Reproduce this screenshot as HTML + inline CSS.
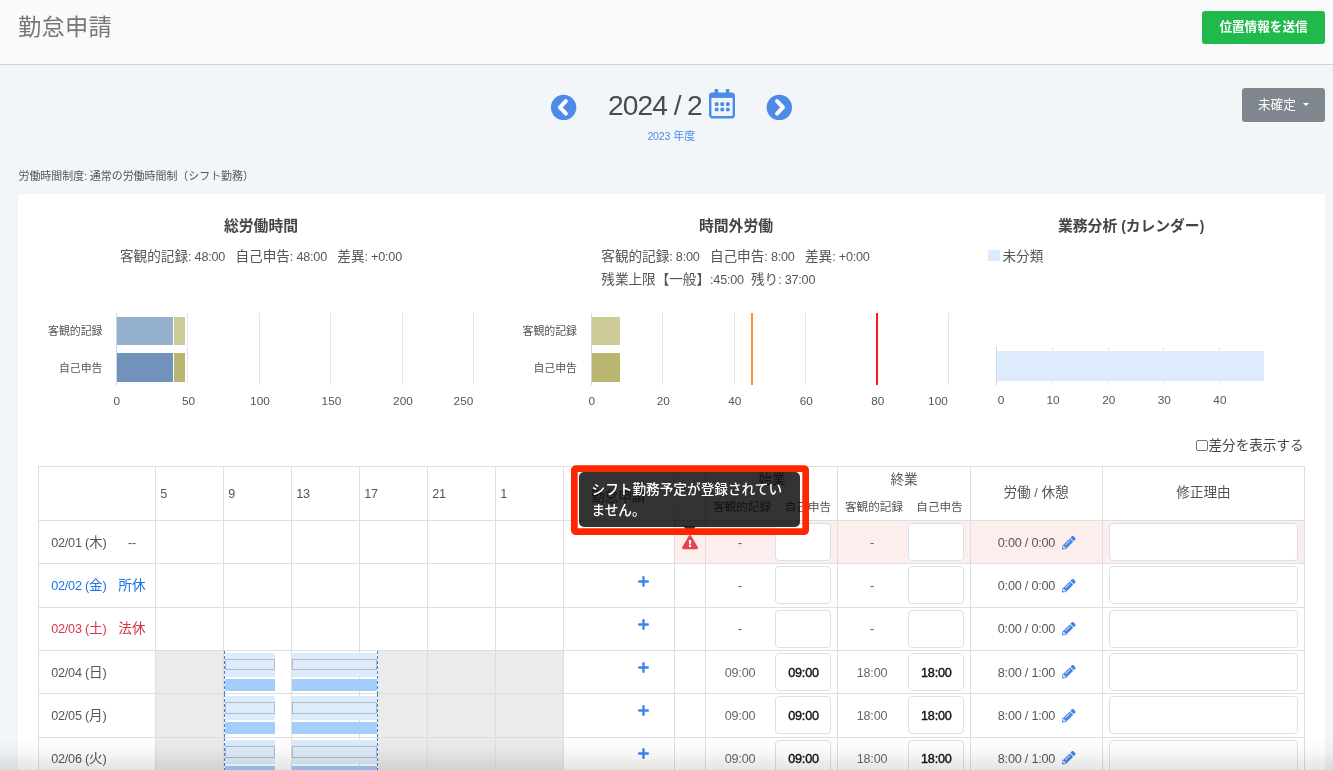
<!DOCTYPE html>
<html lang="ja"><head><meta charset="utf-8"><title>勤怠申請</title>
<style>
html,body{margin:0;padding:0;}
body{width:1333px;height:770px;overflow:hidden;background:#f2f6f9;font-family:"Liberation Sans", "Noto Sans CJK JP", sans-serif;position:relative;color:#555;}
.a{position:absolute;box-sizing:border-box;}
.t{white-space:nowrap;}
.l{font-size:0.93em;letter-spacing:-0.017em;}
.inp{background:#fff;border:1px solid #d6e1e9;border-radius:4px;}
svg{position:absolute;overflow:visible;}
#root{position:absolute;left:0;top:0;width:1333px;height:770px;will-change:transform;}
</style></head>
<body>
<div id="root">
<div class="a " style="left:0px;top:0px;width:1333px;height:64px;background:#f9fafc;"></div>
<div class="a " style="left:0px;top:64px;width:1333px;height:1px;background:#c9d7e3;"></div>
<div class="a t" style="left:18px;top:9.5px;width:400px;height:34px;line-height:34px;font-size:23.2px;color:#777;text-align:left;letter-spacing:0.3px;">勤怠申請</div>
<div class="a " style="left:1202px;top:11px;width:123px;height:33px;background:#22b94c;border-radius:3px;"></div>
<div class="a t" style="left:1202px;top:10.5px;width:123px;height:33px;line-height:33px;font-size:12.6px;color:#fff;text-align:center;font-weight:bold;">位置情報を送信</div>
<svg style="left:0;top:0" width="1333" height="770"><circle cx="563.6" cy="107.4" r="12.7" fill="#4d8be6"/><polyline points="565.9,101.1 559.9,107.4 565.9,113.7" fill="none" stroke="#fff" stroke-width="3.9" stroke-linecap="round" stroke-linejoin="round"/></svg>
<svg style="left:0;top:0" width="1333" height="770"><circle cx="779.3" cy="107.4" r="12.7" fill="#4d8be6"/><polyline points="777,101.1 783,107.4 777,113.7" fill="none" stroke="#fff" stroke-width="3.9" stroke-linecap="round" stroke-linejoin="round"/></svg>
<div class="a t" style="left:608px;top:85px;width:400px;height:40px;line-height:40px;font-size:30px;color:#4a4a4a;text-align:left;"><span style="font-size:28.2px;letter-spacing:-0.9px;word-spacing:-0.4px">2024 / 2</span></div>
<svg style="left:709px;top:89px" width="26" height="29.5" viewBox="0 0 26 29.5">
<rect x="1.2" y="4.6" width="23.6" height="23.7" rx="2.2" fill="none" stroke="#4d8be6" stroke-width="2.4"/>
<rect x="1.2" y="4.6" width="23.6" height="4.3" fill="#4d8be6"/>
<rect x="5.6" y="0" width="3.6" height="7" rx="0.8" fill="#4d8be6"/>
<rect x="16.8" y="0" width="3.6" height="7" rx="0.8" fill="#4d8be6"/>
<g fill="#4d8be6">
<rect x="5.8" y="13.3" width="3.7" height="3.6" rx="0.9"/><rect x="11.4" y="13.3" width="3.7" height="3.6" rx="0.9"/><rect x="17" y="13.3" width="3.7" height="3.6" rx="0.9"/>
<rect x="5.8" y="18.7" width="3.7" height="3.6" rx="0.9"/><rect x="11.4" y="18.7" width="3.7" height="3.6" rx="0.9"/><rect x="17" y="18.7" width="3.7" height="3.6" rx="0.9"/>
</g></svg>
<div class="a t" style="left:611.3px;top:128px;width:120px;height:16px;line-height:16px;font-size:11px;color:#4a8ee6;text-align:center;"><span style="font-size:10.6px;letter-spacing:-0.2px">2023</span> 年度</div>
<div class="a " style="left:1242px;top:88px;width:83px;height:34px;background:#7f868e;border-radius:3px;"></div>
<div class="a t" style="left:1258px;top:87.8px;width:400px;height:34px;line-height:34px;font-size:12.6px;color:#fff;text-align:left;">未確定</div>
<svg style="left:1302.5px;top:103px" width="6" height="3"><polygon points="0,0 6,0 3,3" fill="#fff"/></svg>
<div class="a t" style="left:18.5px;top:168.2px;width:400px;height:16px;line-height:16px;font-size:10.95px;color:#555;text-align:left;">労働時間制度<span class="l">:</span> 通常の労働時間制（シフト勤務）</div>
<div class="a " style="left:18px;top:194px;width:1307px;height:600px;background:#fff;border-radius:3px;"></div>
<div class="a t" style="left:111px;top:214.7px;width:300px;height:22px;line-height:22px;font-size:14.8px;color:#444;text-align:center;font-weight:bold;">総労働時間</div>
<div class="a t" style="left:51px;top:246px;width:420px;height:22px;line-height:22px;font-size:13.6px;color:#555;text-align:center;">客観的記録<span class="l">: 48:00&nbsp;&nbsp;</span> 自己申告<span class="l">: 48:00&nbsp;&nbsp;</span> 差異<span class="l">: +0:00</span></div>
<div class="a " style="left:187px;top:313px;width:1px;height:72px;background:#e6e6e6;"></div>
<div class="a " style="left:259px;top:313px;width:1px;height:72px;background:#e6e6e6;"></div>
<div class="a " style="left:330px;top:313px;width:1px;height:72px;background:#e6e6e6;"></div>
<div class="a " style="left:402px;top:313px;width:1px;height:72px;background:#e6e6e6;"></div>
<div class="a " style="left:473px;top:313px;width:1px;height:72px;background:#e6e6e6;"></div>
<div class="a " style="left:116px;top:313px;width:1px;height:72px;background:#ccd6eb;"></div>
<div class="a " style="left:117px;top:317px;width:56.3px;height:28px;background:#95afcf;"></div>
<div class="a " style="left:174.3px;top:317px;width:11px;height:28px;background:#cdcb98;"></div>
<div class="a " style="left:117px;top:353.3px;width:56.3px;height:28.4px;background:#7092bb;"></div>
<div class="a " style="left:174.3px;top:353.3px;width:11px;height:28.4px;background:#bbb66f;"></div>
<div class="a t" style="left:2.5px;top:323.2px;width:100px;height:16px;line-height:16px;font-size:10.9px;color:#555;text-align:right;">客観的記録</div>
<div class="a t" style="left:2.5px;top:359.5px;width:100px;height:16px;line-height:16px;font-size:10.9px;color:#555;text-align:right;">自己申告</div>
<div class="a t" style="left:86.75px;top:392.5px;width:60px;height:16px;line-height:16px;font-size:11.8px;color:#555;text-align:center;">0</div>
<div class="a t" style="left:158.45px;top:392.5px;width:60px;height:16px;line-height:16px;font-size:11.8px;color:#555;text-align:center;">50</div>
<div class="a t" style="left:229.95px;top:392.5px;width:60px;height:16px;line-height:16px;font-size:11.8px;color:#555;text-align:center;">100</div>
<div class="a t" style="left:301.45px;top:392.5px;width:60px;height:16px;line-height:16px;font-size:11.8px;color:#555;text-align:center;">150</div>
<div class="a t" style="left:372.95px;top:392.5px;width:60px;height:16px;line-height:16px;font-size:11.8px;color:#555;text-align:center;">200</div>
<div class="a t" style="left:413.3px;top:392.5px;width:60px;height:16px;line-height:16px;font-size:11.8px;color:#555;text-align:right;">250</div>
<div class="a t" style="left:586px;top:214.7px;width:300px;height:22px;line-height:22px;font-size:14.8px;color:#444;text-align:center;font-weight:bold;">時間外労働</div>
<div class="a t" style="left:601.3px;top:246px;width:400px;height:22px;line-height:22px;font-size:13.6px;color:#555;text-align:left;">客観的記録<span class="l">: 8:00&nbsp;&nbsp;</span> 自己申告<span class="l">: 8:00&nbsp;&nbsp;</span> 差異<span class="l">: +0:00</span></div>
<div class="a t" style="left:601.3px;top:269px;width:400px;height:22px;line-height:22px;font-size:13.6px;color:#555;text-align:left;">残業上限【一般】<span class="l">:45:00&nbsp;</span> 残り<span class="l">: 37:00</span></div>
<div class="a " style="left:662px;top:313px;width:1px;height:72px;background:#e6e6e6;"></div>
<div class="a " style="left:734px;top:313px;width:1px;height:72px;background:#e6e6e6;"></div>
<div class="a " style="left:805px;top:313px;width:1px;height:72px;background:#e6e6e6;"></div>
<div class="a " style="left:877px;top:313px;width:1px;height:72px;background:#e6e6e6;"></div>
<div class="a " style="left:948px;top:313px;width:1px;height:72px;background:#e6e6e6;"></div>
<div class="a " style="left:591px;top:313px;width:1px;height:72px;background:#ccd6eb;"></div>
<div class="a " style="left:592px;top:317px;width:28px;height:28px;background:#cdcb98;"></div>
<div class="a " style="left:592px;top:353.3px;width:28px;height:28.4px;background:#bbb66f;"></div>
<div class="a " style="left:751.3px;top:313px;width:2px;height:72px;background:#fd9540;"></div>
<div class="a " style="left:875.8px;top:313px;width:2px;height:72px;background:#fc1616;"></div>
<div class="a t" style="left:477px;top:323.2px;width:100px;height:16px;line-height:16px;font-size:10.9px;color:#555;text-align:right;">客観的記録</div>
<div class="a t" style="left:477px;top:359.5px;width:100px;height:16px;line-height:16px;font-size:10.9px;color:#555;text-align:right;">自己申告</div>
<div class="a t" style="left:561.75px;top:392.5px;width:60px;height:16px;line-height:16px;font-size:11.8px;color:#555;text-align:center;">0</div>
<div class="a t" style="left:633.25px;top:392.5px;width:60px;height:16px;line-height:16px;font-size:11.8px;color:#555;text-align:center;">20</div>
<div class="a t" style="left:704.75px;top:392.5px;width:60px;height:16px;line-height:16px;font-size:11.8px;color:#555;text-align:center;">40</div>
<div class="a t" style="left:776.25px;top:392.5px;width:60px;height:16px;line-height:16px;font-size:11.8px;color:#555;text-align:center;">60</div>
<div class="a t" style="left:847.75px;top:392.5px;width:60px;height:16px;line-height:16px;font-size:11.8px;color:#555;text-align:center;">80</div>
<div class="a t" style="left:887.8px;top:392.5px;width:60px;height:16px;line-height:16px;font-size:11.8px;color:#555;text-align:right;">100</div>
<div class="a t" style="left:981px;top:214.7px;width:300px;height:22px;line-height:22px;font-size:14.8px;color:#444;text-align:center;font-weight:bold;">業務分析 <span class="l">(</span>カレンダー<span class="l">)</span></div>
<div class="a " style="left:988px;top:249.5px;width:12px;height:11.5px;background:#ddebfc;"></div>
<div class="a t" style="left:1002.5px;top:245.7px;width:400px;height:22px;line-height:22px;font-size:13.6px;color:#555;text-align:left;">未分類</div>
<div class="a " style="left:1052px;top:347px;width:1px;height:38px;background:#e6e6e6;"></div>
<div class="a " style="left:1108px;top:347px;width:1px;height:38px;background:#e6e6e6;"></div>
<div class="a " style="left:1163px;top:347px;width:1px;height:38px;background:#e6e6e6;"></div>
<div class="a " style="left:1219px;top:347px;width:1px;height:38px;background:#e6e6e6;"></div>
<div class="a " style="left:996px;top:347px;width:1px;height:38px;background:#ccd6eb;"></div>
<div class="a " style="left:997px;top:351px;width:267px;height:30.3px;background:#ddebfc;"></div>
<div class="a t" style="left:971px;top:392.3px;width:60px;height:16px;line-height:16px;font-size:11.8px;color:#555;text-align:center;">0</div>
<div class="a t" style="left:1023.1px;top:392.3px;width:60px;height:16px;line-height:16px;font-size:11.8px;color:#555;text-align:center;">10</div>
<div class="a t" style="left:1078.7px;top:392.3px;width:60px;height:16px;line-height:16px;font-size:11.8px;color:#555;text-align:center;">20</div>
<div class="a t" style="left:1134.3px;top:392.3px;width:60px;height:16px;line-height:16px;font-size:11.8px;color:#555;text-align:center;">30</div>
<div class="a t" style="left:1189.9px;top:392.3px;width:60px;height:16px;line-height:16px;font-size:11.8px;color:#555;text-align:center;">40</div>
<div class="a " style="left:1196px;top:439.5px;width:11.5px;height:11.5px;background:#fff;border:1px solid #767676;border-radius:2px;"></div>
<div class="a t" style="left:1208.5px;top:435.8px;width:400px;height:20px;line-height:20px;font-size:13.6px;color:#444;text-align:left;">差分を表示する</div>
<div class="a " style="left:675px;top:521px;width:629px;height:42px;background:#fdeeee;"></div>
<div class="a " style="left:156px;top:651px;width:68px;height:42px;background:#ebebeb;"></div>
<div class="a " style="left:378px;top:651px;width:185px;height:42px;background:#ebebeb;"></div>
<div class="a " style="left:156px;top:694px;width:68px;height:43px;background:#ebebeb;"></div>
<div class="a " style="left:378px;top:694px;width:185px;height:43px;background:#ebebeb;"></div>
<div class="a " style="left:156px;top:738px;width:68px;height:42px;background:#ebebeb;"></div>
<div class="a " style="left:378px;top:738px;width:185px;height:42px;background:#ebebeb;"></div>
<div class="a " style="left:38px;top:466px;width:1267px;height:1px;background:#dedede;"></div>
<div class="a " style="left:38px;top:520px;width:1267px;height:1px;background:#dedede;"></div>
<div class="a " style="left:38px;top:563px;width:1267px;height:1px;background:#dedede;"></div>
<div class="a " style="left:38px;top:607px;width:1267px;height:1px;background:#dedede;"></div>
<div class="a " style="left:38px;top:650px;width:1267px;height:1px;background:#dedede;"></div>
<div class="a " style="left:38px;top:693px;width:1267px;height:1px;background:#dedede;"></div>
<div class="a " style="left:38px;top:737px;width:1267px;height:1px;background:#dedede;"></div>
<div class="a " style="left:38px;top:466px;width:1px;height:320px;background:#dedede;"></div>
<div class="a " style="left:155px;top:466px;width:1px;height:320px;background:#dedede;"></div>
<div class="a " style="left:223px;top:466px;width:1px;height:320px;background:#dedede;"></div>
<div class="a " style="left:291px;top:466px;width:1px;height:320px;background:#dedede;"></div>
<div class="a " style="left:359px;top:466px;width:1px;height:320px;background:#dedede;"></div>
<div class="a " style="left:427px;top:466px;width:1px;height:320px;background:#dedede;"></div>
<div class="a " style="left:495px;top:466px;width:1px;height:320px;background:#dedede;"></div>
<div class="a " style="left:563px;top:466px;width:1px;height:320px;background:#dedede;"></div>
<div class="a " style="left:674px;top:466px;width:1px;height:320px;background:#dedede;"></div>
<div class="a " style="left:705px;top:466px;width:1px;height:320px;background:#dedede;"></div>
<div class="a " style="left:837px;top:466px;width:1px;height:320px;background:#dedede;"></div>
<div class="a " style="left:970px;top:466px;width:1px;height:320px;background:#dedede;"></div>
<div class="a " style="left:1102px;top:466px;width:1px;height:320px;background:#dedede;"></div>
<div class="a " style="left:1304px;top:466px;width:1px;height:320px;background:#dedede;"></div>
<div class="a t" style="left:160.2px;top:483.8px;width:400px;height:20px;line-height:20px;font-size:13.6px;color:#555;text-align:left;"><span class="l">5</span></div>
<div class="a t" style="left:228.2px;top:483.8px;width:400px;height:20px;line-height:20px;font-size:13.6px;color:#555;text-align:left;"><span class="l">9</span></div>
<div class="a t" style="left:296.2px;top:483.8px;width:400px;height:20px;line-height:20px;font-size:13.6px;color:#555;text-align:left;"><span class="l">13</span></div>
<div class="a t" style="left:364.2px;top:483.8px;width:400px;height:20px;line-height:20px;font-size:13.6px;color:#555;text-align:left;"><span class="l">17</span></div>
<div class="a t" style="left:432.2px;top:483.8px;width:400px;height:20px;line-height:20px;font-size:13.6px;color:#555;text-align:left;"><span class="l">21</span></div>
<div class="a t" style="left:500.2px;top:483.8px;width:400px;height:20px;line-height:20px;font-size:13.6px;color:#555;text-align:left;"><span class="l">1</span></div>
<div class="a t" style="left:591px;top:486.5px;width:400px;height:20px;line-height:20px;font-size:13.6px;color:#555;text-align:left;">勤怠申請</div>
<div class="a t" style="left:722px;top:470px;width:100px;height:20px;line-height:20px;font-size:13.6px;color:#555;text-align:center;">始業</div>
<div class="a t" style="left:854px;top:470px;width:100px;height:20px;line-height:20px;font-size:13.6px;color:#555;text-align:center;">終業</div>
<div class="a t" style="left:692px;top:498px;width:100px;height:18px;line-height:18px;font-size:11.6px;color:#555;text-align:center;">客観的記録</div>
<div class="a t" style="left:824px;top:498px;width:100px;height:18px;line-height:18px;font-size:11.6px;color:#555;text-align:center;">客観的記録</div>
<div class="a t" style="left:758px;top:498px;width:100px;height:18px;line-height:18px;font-size:11.6px;color:#555;text-align:center;">自己申告</div>
<div class="a t" style="left:889.5px;top:498px;width:100px;height:18px;line-height:18px;font-size:11.6px;color:#555;text-align:center;">自己申告</div>
<div class="a t" style="left:971px;top:482.5px;width:130px;height:20px;line-height:20px;font-size:13.6px;color:#555;text-align:center;">労働 <span class="l">/</span> 休憩</div>
<div class="a t" style="left:1138.5px;top:482.5px;width:130px;height:20px;line-height:20px;font-size:13.6px;color:#555;text-align:center;">修正理由</div>
<div class="a t" style="left:51.2px;top:532.925px;width:400px;height:20px;line-height:20px;font-size:13.6px;color:#555;text-align:left;"><span class="l">02/01 (</span>木<span class="l">)</span></div>
<div class="a t" style="left:128px;top:532.925px;width:400px;height:20px;line-height:20px;font-size:13.6px;color:#555;text-align:left;"><span class="l">--</span></div>
<svg style="left:682px;top:535px" width="16" height="14.2" viewBox="0 0 576 512"><path fill="#e8424c" d="M569.500 440C588 472 564.800 512 527.900 512H48.100c-36.900 0-60-40.100-41.600-72L246.400 24c18.500-32 64.700-32 83.200 0l239.900 416zM288 354c-25.400 0-46 20.600-46 46s20.600 46 46 46 46-20.600 46-46-20.600-46-46-46zm-43.700-165.300l7.400 136c.3 6.400 5.600 11.300 12 11.300h48.500c6.400 0 11.600-5 12-11.300l7.400-136c.4-6.900-5.100-12.700-12-12.700h-63.400c-6.900 0-12.400 5.800-12 12.700z"/></svg>
<div class="a inp" style="left:775px;top:523px;width:56px;height:38px;"></div>
<div class="a inp" style="left:908px;top:523px;width:56px;height:38px;"></div>
<div class="a inp" style="left:1109.3px;top:523px;width:188.5px;height:38px;"></div>
<div class="a t" style="left:710px;top:532.925px;width:60px;height:20px;line-height:20px;font-size:13.6px;color:#555;text-align:center;"><span class="l">-</span></div>
<div class="a t" style="left:842px;top:532.925px;width:60px;height:20px;line-height:20px;font-size:13.6px;color:#555;text-align:center;"><span class="l">-</span></div>
<div class="a t" style="left:997.8px;top:532.925px;width:400px;height:20px;line-height:20px;font-size:13.6px;color:#555;text-align:left;"><span class="l">0:00 / 0:00</span></div>
<svg style="left:1061.5px;top:535.625px" width="13.6" height="13.6" viewBox="0 0 512 512"><path fill="#4285e8" fill-rule="evenodd" d="M497.9 142.1l-46.100 46.100c-4.700 4.700-12.300 4.700-17 0l-111-111c-4.700-4.700-4.700-12.300 0-17l46.100-46.100c18.700-18.700 49.100-18.700 67.900 0l60.100 60.100c18.800 18.700 18.800 49.100 0 67.900zM284.200 99.800L21.600 362.400.4 483.900c-2.900 16.400 11.400 30.600 27.800 27.800l121.500-21.300 262.600-262.600c4.700-4.700 4.700-12.300 0-17l-111-111c-4.800-4.700-12.400-4.700-17.100 0zM124.100 339.900c-5.500-5.500-5.500-14.300 0-19.800l154-154c5.500-5.500 14.300-5.500 19.800 0s5.500 14.300 0 19.800l-154 154c-5.500 5.500-14.300 5.500-19.800 0zM88 424h48v36.300l-64.500 11.300-31.100-31.100L51.700 376H88v48z"/></svg>
<div class="a t" style="left:51.2px;top:576.3px;width:400px;height:20px;line-height:20px;font-size:13.6px;color:#1a73e8;text-align:left;"><span class="l">02/02 (</span>金<span class="l">)</span></div>
<div class="a t" style="left:118.3px;top:576.3px;width:400px;height:20px;line-height:20px;font-size:13.6px;color:#1a73e8;text-align:left;">所休</div>
<svg style="left:637.7px;top:575.7px" width="11" height="11" viewBox="0 0 12 12"><path d="M6 1.3V10.7M1.3 6H10.7" stroke="#3d84f0" stroke-width="2.6" stroke-linecap="round" fill="none"/></svg>
<div class="a inp" style="left:775px;top:566.4px;width:56px;height:38px;"></div>
<div class="a inp" style="left:908px;top:566.4px;width:56px;height:38px;"></div>
<div class="a inp" style="left:1109.3px;top:566.4px;width:188.5px;height:38px;"></div>
<div class="a t" style="left:710px;top:576.3px;width:60px;height:20px;line-height:20px;font-size:13.6px;color:#555;text-align:center;"><span class="l">-</span></div>
<div class="a t" style="left:842px;top:576.3px;width:60px;height:20px;line-height:20px;font-size:13.6px;color:#555;text-align:center;"><span class="l">-</span></div>
<div class="a t" style="left:997.8px;top:576.3px;width:400px;height:20px;line-height:20px;font-size:13.6px;color:#555;text-align:left;"><span class="l">0:00 / 0:00</span></div>
<svg style="left:1061.5px;top:579px" width="13.6" height="13.6" viewBox="0 0 512 512"><path fill="#4285e8" fill-rule="evenodd" d="M497.9 142.1l-46.100 46.100c-4.700 4.700-12.300 4.700-17 0l-111-111c-4.700-4.700-4.700-12.300 0-17l46.100-46.100c18.700-18.700 49.100-18.700 67.900 0l60.100 60.100c18.800 18.700 18.800 49.100 0 67.900zM284.200 99.800L21.600 362.400.4 483.900c-2.900 16.400 11.400 30.600 27.800 27.800l121.500-21.300 262.600-262.600c4.700-4.700 4.700-12.300 0-17l-111-111c-4.800-4.700-12.400-4.700-17.100 0zM124.100 339.900c-5.500-5.500-5.500-14.300 0-19.800l154-154c5.500-5.500 14.300-5.500 19.800 0s5.500 14.300 0 19.800l-154 154c-5.500 5.500-14.300 5.500-19.800 0zM88 424h48v36.300l-64.500 11.300-31.100-31.100L51.700 376H88v48z"/></svg>
<div class="a t" style="left:51.2px;top:619.475px;width:400px;height:20px;line-height:20px;font-size:13.6px;color:#dc3545;text-align:left;"><span class="l">02/03 (</span>土<span class="l">)</span></div>
<div class="a t" style="left:118.3px;top:619.475px;width:400px;height:20px;line-height:20px;font-size:13.6px;color:#dc3545;text-align:left;">法休</div>
<svg style="left:637.7px;top:618.875px" width="11" height="11" viewBox="0 0 12 12"><path d="M6 1.3V10.7M1.3 6H10.7" stroke="#3d84f0" stroke-width="2.6" stroke-linecap="round" fill="none"/></svg>
<div class="a inp" style="left:775px;top:610px;width:56px;height:38px;"></div>
<div class="a inp" style="left:908px;top:610px;width:56px;height:38px;"></div>
<div class="a inp" style="left:1109.3px;top:610px;width:188.5px;height:38px;"></div>
<div class="a t" style="left:710px;top:619.475px;width:60px;height:20px;line-height:20px;font-size:13.6px;color:#555;text-align:center;"><span class="l">-</span></div>
<div class="a t" style="left:842px;top:619.475px;width:60px;height:20px;line-height:20px;font-size:13.6px;color:#555;text-align:center;"><span class="l">-</span></div>
<div class="a t" style="left:997.8px;top:619.475px;width:400px;height:20px;line-height:20px;font-size:13.6px;color:#555;text-align:left;"><span class="l">0:00 / 0:00</span></div>
<svg style="left:1061.5px;top:622.175px" width="13.6" height="13.6" viewBox="0 0 512 512"><path fill="#4285e8" fill-rule="evenodd" d="M497.9 142.1l-46.100 46.100c-4.700 4.700-12.300 4.700-17 0l-111-111c-4.700-4.700-4.700-12.300 0-17l46.100-46.100c18.700-18.700 49.100-18.700 67.900 0l60.100 60.100c18.800 18.700 18.800 49.100 0 67.900zM284.200 99.800L21.600 362.400.4 483.900c-2.900 16.400 11.400 30.600 27.800 27.800l121.500-21.300 262.600-262.600c4.700-4.700 4.700-12.300 0-17l-111-111c-4.800-4.700-12.400-4.700-17.100 0zM124.100 339.900c-5.500-5.500-5.500-14.300 0-19.800l154-154c5.500-5.500 14.300-5.500 19.800 0s5.500 14.300 0 19.800l-154 154c-5.500 5.500-14.300 5.500-19.800 0zM88 424h48v36.300l-64.500 11.300-31.100-31.100L51.700 376H88v48z"/></svg>
<div class="a t" style="left:51.2px;top:662.5px;width:400px;height:20px;line-height:20px;font-size:13.6px;color:#555;text-align:left;"><span class="l">02/04 (</span>日<span class="l">)</span></div>
<svg style="left:637.7px;top:661.9px" width="11" height="11" viewBox="0 0 12 12"><path d="M6 1.3V10.7M1.3 6H10.7" stroke="#3d84f0" stroke-width="2.6" stroke-linecap="round" fill="none"/></svg>
<div class="a inp" style="left:775px;top:653.1px;width:56px;height:38px;"></div>
<div class="a inp" style="left:908px;top:653.1px;width:56px;height:38px;"></div>
<div class="a inp" style="left:1109.3px;top:653.1px;width:188.5px;height:38px;"></div>
<div class="a t" style="left:710px;top:662.5px;width:60px;height:20px;line-height:20px;font-size:13.6px;color:#666;text-align:center;"><span class="l">09:00</span></div>
<div class="a t" style="left:842px;top:662.5px;width:60px;height:20px;line-height:20px;font-size:13.6px;color:#666;text-align:center;"><span class="l">18:00</span></div>
<div class="a t" style="left:776px;top:662.5px;width:55px;height:20px;line-height:20px;font-size:13.6px;color:#111;text-align:center;-webkit-text-stroke:0.4px #111;"><span class="l">09:00</span></div>
<div class="a t" style="left:908.8px;top:662.5px;width:55px;height:20px;line-height:20px;font-size:13.6px;color:#111;text-align:center;-webkit-text-stroke:0.4px #111;"><span class="l">18:00</span></div>
<div class="a " style="left:224.5px;top:653.1px;width:50.9px;height:23.7px;background:#ddecfc;"></div>
<div class="a " style="left:224.5px;top:658.9px;width:50.4px;height:11.6px;border:1px solid #b9b9b9;background:#ddecfc;"></div>
<div class="a " style="left:224.5px;top:678.6px;width:50.9px;height:12.5px;background:#a4cdfb;"></div>
<div class="a " style="left:292.3px;top:653.1px;width:85.1px;height:23.7px;background:#ddecfc;"></div>
<div class="a " style="left:292.3px;top:658.9px;width:84.6px;height:11.6px;border:1px solid #b9b9b9;background:#ddecfc;"></div>
<div class="a " style="left:292.3px;top:678.6px;width:85.1px;height:12.5px;background:#a4cdfb;"></div>
<div class="a " style="left:224px;top:650.6px;width:1px;height:43.2px;background:repeating-linear-gradient(to bottom,#3f7fdc 0,#3f7fdc 3px,rgba(255,255,255,0) 3px,rgba(255,255,255,0) 5px);"></div>
<div class="a " style="left:377px;top:650.6px;width:1px;height:43.2px;background:repeating-linear-gradient(to bottom,#3f7fdc 0,#3f7fdc 3px,rgba(255,255,255,0) 3px,rgba(255,255,255,0) 5px);"></div>
<div class="a t" style="left:997.8px;top:662.5px;width:400px;height:20px;line-height:20px;font-size:13.6px;color:#555;text-align:left;"><span class="l">8:00 / 1:00</span></div>
<svg style="left:1061.5px;top:665.2px" width="13.6" height="13.6" viewBox="0 0 512 512"><path fill="#4285e8" fill-rule="evenodd" d="M497.9 142.1l-46.100 46.100c-4.700 4.700-12.300 4.700-17 0l-111-111c-4.700-4.700-4.700-12.300 0-17l46.100-46.100c18.700-18.700 49.100-18.700 67.900 0l60.100 60.100c18.800 18.700 18.800 49.100 0 67.900zM284.200 99.800L21.600 362.400.4 483.900c-2.900 16.400 11.400 30.600 27.800 27.800l121.500-21.300 262.600-262.600c4.700-4.700 4.700-12.300 0-17l-111-111c-4.800-4.700-12.400-4.700-17.100 0zM124.100 339.900c-5.500-5.500-5.500-14.300 0-19.800l154-154c5.500-5.500 14.300-5.500 19.800 0s5.500 14.300 0 19.800l-154 154c-5.500 5.500-14.300 5.500-19.800 0zM88 424h48v36.300l-64.500 11.300-31.100-31.100L51.700 376H88v48z"/></svg>
<div class="a t" style="left:51.2px;top:706.05px;width:400px;height:20px;line-height:20px;font-size:13.6px;color:#555;text-align:left;"><span class="l">02/05 (</span>月<span class="l">)</span></div>
<svg style="left:637.7px;top:705.45px" width="11" height="11" viewBox="0 0 12 12"><path d="M6 1.3V10.7M1.3 6H10.7" stroke="#3d84f0" stroke-width="2.6" stroke-linecap="round" fill="none"/></svg>
<div class="a inp" style="left:775px;top:696.3px;width:56px;height:38px;"></div>
<div class="a inp" style="left:908px;top:696.3px;width:56px;height:38px;"></div>
<div class="a inp" style="left:1109.3px;top:696.3px;width:188.5px;height:38px;"></div>
<div class="a t" style="left:710px;top:706.05px;width:60px;height:20px;line-height:20px;font-size:13.6px;color:#666;text-align:center;"><span class="l">09:00</span></div>
<div class="a t" style="left:842px;top:706.05px;width:60px;height:20px;line-height:20px;font-size:13.6px;color:#666;text-align:center;"><span class="l">18:00</span></div>
<div class="a t" style="left:776px;top:706.05px;width:55px;height:20px;line-height:20px;font-size:13.6px;color:#111;text-align:center;-webkit-text-stroke:0.4px #111;"><span class="l">09:00</span></div>
<div class="a t" style="left:908.8px;top:706.05px;width:55px;height:20px;line-height:20px;font-size:13.6px;color:#111;text-align:center;-webkit-text-stroke:0.4px #111;"><span class="l">18:00</span></div>
<div class="a " style="left:224.5px;top:696.3px;width:50.9px;height:23.7px;background:#ddecfc;"></div>
<div class="a " style="left:224.5px;top:702.1px;width:50.4px;height:11.6px;border:1px solid #b9b9b9;background:#ddecfc;"></div>
<div class="a " style="left:224.5px;top:721.8px;width:50.9px;height:12.5px;background:#a4cdfb;"></div>
<div class="a " style="left:292.3px;top:696.3px;width:85.1px;height:23.7px;background:#ddecfc;"></div>
<div class="a " style="left:292.3px;top:702.1px;width:84.6px;height:11.6px;border:1px solid #b9b9b9;background:#ddecfc;"></div>
<div class="a " style="left:292.3px;top:721.8px;width:85.1px;height:12.5px;background:#a4cdfb;"></div>
<div class="a " style="left:224px;top:693.8px;width:1px;height:43.9px;background:repeating-linear-gradient(to bottom,#3f7fdc 0,#3f7fdc 3px,rgba(255,255,255,0) 3px,rgba(255,255,255,0) 5px);"></div>
<div class="a " style="left:377px;top:693.8px;width:1px;height:43.9px;background:repeating-linear-gradient(to bottom,#3f7fdc 0,#3f7fdc 3px,rgba(255,255,255,0) 3px,rgba(255,255,255,0) 5px);"></div>
<div class="a t" style="left:997.8px;top:706.05px;width:400px;height:20px;line-height:20px;font-size:13.6px;color:#555;text-align:left;"><span class="l">8:00 / 1:00</span></div>
<svg style="left:1061.5px;top:708.75px" width="13.6" height="13.6" viewBox="0 0 512 512"><path fill="#4285e8" fill-rule="evenodd" d="M497.9 142.1l-46.100 46.100c-4.700 4.700-12.300 4.700-17 0l-111-111c-4.700-4.700-4.700-12.300 0-17l46.100-46.100c18.700-18.700 49.100-18.700 67.900 0l60.100 60.100c18.800 18.700 18.800 49.100 0 67.900zM284.200 99.800L21.600 362.400.4 483.900c-2.900 16.400 11.400 30.600 27.800 27.800l121.500-21.300 262.600-262.600c4.700-4.700 4.700-12.300 0-17l-111-111c-4.800-4.700-12.400-4.700-17.100 0zM124.100 339.900c-5.500-5.500-5.500-14.300 0-19.800l154-154c5.500-5.500 14.300-5.500 19.800 0s5.500 14.300 0 19.800l-154 154c-5.500 5.500-14.300 5.500-19.800 0zM88 424h48v36.300l-64.500 11.300-31.100-31.100L51.700 376H88v48z"/></svg>
<div class="a t" style="left:51.2px;top:748.6px;width:400px;height:20px;line-height:20px;font-size:13.6px;color:#555;text-align:left;"><span class="l">02/06 (</span>火<span class="l">)</span></div>
<svg style="left:637.7px;top:748px" width="11" height="11" viewBox="0 0 12 12"><path d="M6 1.3V10.7M1.3 6H10.7" stroke="#3d84f0" stroke-width="2.6" stroke-linecap="round" fill="none"/></svg>
<div class="a inp" style="left:775px;top:740.2px;width:56px;height:38px;"></div>
<div class="a inp" style="left:908px;top:740.2px;width:56px;height:38px;"></div>
<div class="a inp" style="left:1109.3px;top:740.2px;width:188.5px;height:38px;"></div>
<div class="a t" style="left:710px;top:748.6px;width:60px;height:20px;line-height:20px;font-size:13.6px;color:#666;text-align:center;"><span class="l">09:00</span></div>
<div class="a t" style="left:842px;top:748.6px;width:60px;height:20px;line-height:20px;font-size:13.6px;color:#666;text-align:center;"><span class="l">18:00</span></div>
<div class="a t" style="left:776px;top:748.6px;width:55px;height:20px;line-height:20px;font-size:13.6px;color:#111;text-align:center;-webkit-text-stroke:0.4px #111;"><span class="l">09:00</span></div>
<div class="a t" style="left:908.8px;top:748.6px;width:55px;height:20px;line-height:20px;font-size:13.6px;color:#111;text-align:center;-webkit-text-stroke:0.4px #111;"><span class="l">18:00</span></div>
<div class="a " style="left:224.5px;top:740.2px;width:50.9px;height:23.7px;background:#ddecfc;"></div>
<div class="a " style="left:224.5px;top:746px;width:50.4px;height:11.6px;border:1px solid #b9b9b9;background:#ddecfc;"></div>
<div class="a " style="left:224.5px;top:765.7px;width:50.9px;height:12.5px;background:#a4cdfb;"></div>
<div class="a " style="left:292.3px;top:740.2px;width:85.1px;height:23.7px;background:#ddecfc;"></div>
<div class="a " style="left:292.3px;top:746px;width:84.6px;height:11.6px;border:1px solid #b9b9b9;background:#ddecfc;"></div>
<div class="a " style="left:292.3px;top:765.7px;width:85.1px;height:12.5px;background:#a4cdfb;"></div>
<div class="a " style="left:224px;top:737.7px;width:1px;height:41.2px;background:repeating-linear-gradient(to bottom,#3f7fdc 0,#3f7fdc 3px,rgba(255,255,255,0) 3px,rgba(255,255,255,0) 5px);"></div>
<div class="a " style="left:377px;top:737.7px;width:1px;height:41.2px;background:repeating-linear-gradient(to bottom,#3f7fdc 0,#3f7fdc 3px,rgba(255,255,255,0) 3px,rgba(255,255,255,0) 5px);"></div>
<div class="a t" style="left:997.8px;top:748.6px;width:400px;height:20px;line-height:20px;font-size:13.6px;color:#555;text-align:left;"><span class="l">8:00 / 1:00</span></div>
<svg style="left:1061.5px;top:751.3px" width="13.6" height="13.6" viewBox="0 0 512 512"><path fill="#4285e8" fill-rule="evenodd" d="M497.9 142.1l-46.100 46.100c-4.700 4.700-12.300 4.700-17 0l-111-111c-4.700-4.700-4.700-12.300 0-17l46.100-46.100c18.700-18.700 49.100-18.700 67.900 0l60.100 60.100c18.800 18.700 18.800 49.100 0 67.900zM284.200 99.800L21.600 362.400.4 483.900c-2.900 16.400 11.400 30.600 27.800 27.800l121.500-21.300 262.600-262.600c4.700-4.700 4.700-12.300 0-17l-111-111c-4.800-4.700-12.400-4.700-17.100 0zM124.100 339.900c-5.500-5.500-5.500-14.300 0-19.800l154-154c5.500-5.500 14.300-5.500 19.800 0s5.500 14.300 0 19.800l-154 154c-5.500 5.500-14.300 5.500-19.800 0zM88 424h48v36.300l-64.500 11.300-31.100-31.100L51.700 376H88v48z"/></svg>
<svg style="left:0;top:0" width="1333" height="770"><polygon points="683.5,526.4 696,526.4 689.7,532.5" fill="#333"/></svg>
<div class="a " style="left:579px;top:472.2px;width:221px;height:54.4px;background:rgba(0,0,0,0.8);border-radius:5px;"></div>
<div class="a" style="left:591.5px;top:480.1px;width:200px;font-size:13.65px;line-height:20.4px;color:#fff;font-weight:500;">シフト勤務予定が登録されてい<br>ません。</div>
<svg style="left:0;top:0" width="1333" height="770"><rect x="574.35" y="468.6" width="231.3" height="63.1" rx="1.5" fill="none" stroke="#ff2600" stroke-width="6.7" stroke-linejoin="round"/></svg>
<div class="a " style="left:0px;top:738px;width:1333px;height:32px;background:linear-gradient(to bottom, rgba(0,0,0,0) 0%, rgba(0,0,0,0.025) 40%, rgba(0,0,0,0.105) 100%);"></div>
</div>
</body></html>
